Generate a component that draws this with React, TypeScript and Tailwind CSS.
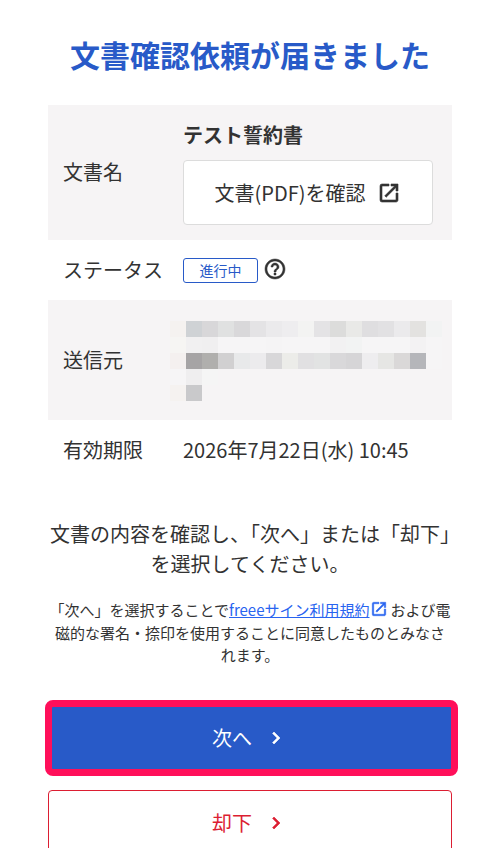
const blur = [
  ['#f5f2f0', '#cfd2d5', '#d8d7d9', '#e0e1e1', '#d9d8da', '#e4e3e5', '#ebeaec', '#eeedef', '#f3f3f2', '#e4e3e5', '#dcdcdb', '#e9e9e7', '#dfdee0', '#e2e1e3', '#ebeaec', '#e3e2e0', '#f2f3f3'],
  ['#f6f5f3', '#f1f0f1', '#f0eff0', '#f6f5f6', '#f6f5f6', '#f6f5f6', '#f5f4f5', '#f6f5f6', '#f6f5f6', '#f6f5f6', '#f2f1f2', '#f2f3f3', '#f6f5f6', '#f6f5f6', '#f6f5f6', '#f3f2f3', '#f6f5f6'],
  ['#f4f0ef', '#a6a4a5', '#b0afad', '#d1d0d1', '#e8e9ea', '#ecebed', '#d8d7d9', '#ecece9', '#e1e0e2', '#e2e3e3', '#d9d8da', '#d6d5d7', '#eeedef', '#e6e6e4', '#dad8d8', '#b5b6ba', '#f6f5f6'],
  ['#f6f5f6', '#efeeef', '#f5f5f5'],
  ['#f5f2f0', '#c9c9cb'],
]

function ExternalIcon({ className }: { className: string }) {
  return (
    <svg viewBox="0 0 24 24" fill="currentColor" stroke="currentColor" strokeWidth="0.6" className={className}>
      <path d="M19 19H5V5h7V3H5a2 2 0 0 0-2 2v14a2 2 0 0 0 2 2h14c1.1 0 2-.9 2-2v-7h-2v7zM14 3v2h3.59l-9.83 9.83 1.41 1.41L19 6.41V10h2V3h-7z" />
    </svg>
  )
}

function Chevron() {
  return (
    <svg viewBox="0 0 24 24" fill="currentColor" stroke="currentColor" strokeWidth="0.6" className="h-6 w-6">
      <path d="M10 6 8.59 7.41 13.17 12l-4.58 4.59L10 18l6-6z" />
    </svg>
  )
}

export default function App() {
  return (
    <div className="w-[500px] h-[848px] overflow-hidden bg-white px-12 text-[#323232] font-['Noto_Sans_CJK_JP','Noto_Sans',sans-serif]">
      <h1 className="h-[105px] pt-[33px] text-center text-[30px] leading-[42px] font-bold text-[#285ac8] whitespace-nowrap">
        文書確認依頼が届きました
      </h1>

      <div className="flex h-[135px] bg-[#f6f4f5]">
        <div className="w-[135px] pl-[15px] pt-[50px] text-[20px] leading-[34px]">文書名</div>
        <div className="pt-[13px]">
          <div className="text-[20px] leading-[34px] font-bold">テスト誓約書</div>
          <div className="mt-[8px] flex h-[65px] w-[250px] items-center justify-center gap-3 rounded border border-[#dcdcdc] bg-white text-[20px]">
            文書(PDF)を確認
            <ExternalIcon className="h-6 w-6" />
          </div>
        </div>
      </div>

      <div className="flex h-[60px] items-center">
        <div className="w-[135px] pl-[15px] text-[20px] whitespace-nowrap">ステータス</div>
        <div className="flex h-[25px] w-[75px] items-center justify-center rounded-[3px] border border-[#285ac8] text-[14px] text-[#285ac8]">
          進行中
        </div>
        <svg viewBox="0 0 24 24" fill="currentColor" stroke="currentColor" strokeWidth="0.5" className="ml-[5px] mb-[2px] h-6 w-6">
          <path d="M11 18h2v-2h-2v2zm1-16C6.48 2 2 6.48 2 12s4.48 10 10 10 10-4.48 10-10S17.52 2 12 2zm0 18c-4.41 0-8-3.59-8-8s3.59-8 8-8 8 3.59 8 8-3.59 8-8 8zm0-14c-2.21 0-4 1.79-4 4h2c0-1.1.9-2 2-2s2 .9 2 2c0 2-3 1.75-3 5h2c0-2.25 3-2.5 3-5 0-2.21-1.79-4-4-4z" />
        </svg>
      </div>

      <div className="flex h-[120px] bg-[#f6f4f5]">
        <div className="w-[122px] pl-[15px] pt-[43px] text-[20px] leading-[34px]">送信元</div>
        <div className="pt-[21px]">
          {blur.map((row, i) => (
            <div key={i} className="flex">
              {row.map((color, j) => (
                <div key={j} className="h-4 w-4" style={{ backgroundColor: color }} />
              ))}
            </div>
          ))}
        </div>
      </div>

      <div className="flex h-[60px] items-center text-[20px]">
        <div className="w-[135px] pl-[15px]">有効期限</div>
        <div className="whitespace-nowrap">2026年7月22日(水) 10:45</div>
      </div>

      <p className="-mx-4 mt-[39px] pl-[10px] text-center text-[20px] leading-[30px] whitespace-nowrap">
        文書の内容を確認し、「次へ」または「却下」
        <br />
        <span className="-ml-[10px]">を選択してください。</span>
      </p>

      <p className="-mx-1 mt-[20px] text-center text-[15px] leading-[22.5px] whitespace-nowrap">
        「次へ」を選択することで
        <span className="text-[#2864f0] underline">freeeサイン利用規約</span>
        <ExternalIcon className="mr-[3px] -mt-[6px] -mb-[2px] inline h-[18px] w-[18px] align-baseline text-[#2864f0]" />
        および電
        <br />
        磁的な署名・捺印を使用することに同意したものとみなさ
        <br />
        れます。
      </p>

      <div className="-ml-[3px] -mr-[6px] mt-[33px] rounded-lg border-[7px] border-[#ff0f5a] bg-[#285ac8]">
        <div className="flex h-[62px] items-center justify-center gap-3 pr-[3px] text-[20px] text-white">
          次へ
          <Chevron />
        </div>
      </div>

      <div className="mt-[14px] flex h-[66px] items-center justify-center gap-3 rounded border border-[#dc1e32] text-[20px] text-[#dc1e32]">
        却下
        <Chevron />
      </div>
    </div>
  )
}
